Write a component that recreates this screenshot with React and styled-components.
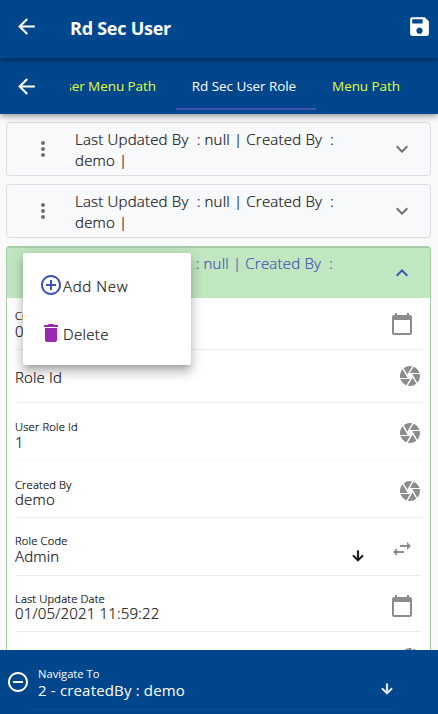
import React from "react";
import styled, { createGlobalStyle } from "styled-components";
import {
  MdArrowBack, MdSave, MdMoreVert, MdExpandMore, MdExpandLess, MdAddCircleOutline,
  MdDelete, MdCamera, MdCalendarToday, MdSwapHoriz, MdArrowDownward, MdRemoveCircleOutline,
} from "react-icons/md";

const GlobalStyle = createGlobalStyle`
  * { box-sizing: border-box; }
  body { margin: 0; background: #fafafa; overflow: hidden; }
  svg { display: block; flex: none; }
`;

const Page = styled.div`
  display: flex;
  flex-direction: column;
  width: 438px;
  height: 714px;
  overflow: hidden;
  background: #fafafa;
  color: #111;
  font: 300 15px/21px "Open Sans", "Noto Sans", sans-serif;
`;

const AppBar = styled.header`
  position: relative;
  z-index: 3;
  flex: none;
  display: flex;
  align-items: center;
  height: 58px;
  padding: 0 6px 6px 14px;
  background: #00468c;
  color: #fff;
  box-shadow: 0 2px 4px -1px rgba(0, 0, 0, 0.2), 0 4px 5px rgba(0, 0, 0, 0.14), 0 1px 10px rgba(0, 0, 0, 0.12);
`;

const Title = styled.h1`
  flex: 1;
  margin: 3px 0 0 31px;
  font-size: 18px;
  line-height: 24px;
  font-weight: 700;
  letter-spacing: -0.25px;
`;

const TabBar = styled.nav`
  position: relative;
  z-index: 2;
  flex: none;
  display: flex;
  align-items: center;
  height: 56px;
  padding-left: 14px;
  background: #00468c;
  color: #fff;
  box-shadow: 0 2px 4px -1px rgba(0, 0, 0, 0.2), 0 4px 5px rgba(0, 0, 0, 0.14), 0 1px 10px rgba(0, 0, 0, 0.12);
`;

const Tabs = styled.div`
  display: flex;
  width: 369px;
  height: 56px;
  margin-left: 31px;
  overflow: hidden;
`;

const Tab = styled.div`
  flex: none;
  display: flex;
  justify-content: ${(p) => p.$align || "center"};
  width: ${(p) => p.$width}px;
  height: 52px;
  padding: 18px ${(p) => (p.$align ? 20 : p.$active ? 4 : 0)}px 0 0;
  font-size: 13.5px;
  font-weight: 400;
  line-height: 20px;
  white-space: nowrap;
  letter-spacing: -0.07px;
  color: ${(p) => (p.$active ? "#fff" : "#e2ff38")};
  border-bottom: 2px solid ${(p) => (p.$active ? "#3f51b5" : "transparent")};
`;

const Content = styled.main`
  position: relative;
  flex: 1;
  min-height: 0;
  display: flex;
  flex-direction: column;
  gap: 8px;
  padding: 8px 7px 0 6px;
  overflow: hidden;
  -webkit-text-stroke: 0.2px currentColor;
`;

const Summary = styled.div`
  flex: none;
  display: flex;
  align-items: center;
  height: ${(p) => (p.$open ? 50 : 54)}px;
  padding: 0 16px 0 ${(p) => (p.$open ? 23 : 24)}px;
  border: ${(p) => (p.$open ? "0" : "1px solid #dadce0")};
  border-radius: ${(p) => (p.$open ? 0 : 4)}px;
  background: ${(p) => (p.$open ? "#c1e7c1" : "#f8f9fb")};
  color: ${(p) => (p.$open ? "#3f51b5" : "#111")};
`;

const SummaryText = styled.div`
  flex: 1;
  height: 42px;
  margin: ${(p) => (p.$open ? "1px" : "2px")} 0 0 20px;
  white-space: pre;
  letter-spacing: 0.2px;
`;

const IconTone = styled.span`
  display: flex;
  color: ${(p) => p.$color};
`;

const OpenPanel = styled.section`
  flex: none;
  border: 1px solid #a5cdaa;
  border-top-width: 2px;
  border-radius: 4px;
  background: #fff;
  overflow: hidden;
`;

const Fields = styled.div`
  padding: 0 8px;
`;

const Field = styled.div`
  display: flex;
  align-items: flex-end;
  justify-content: space-between;
  height: ${(p) => p.$height}px;
  border-bottom: 1px solid ${(p) => p.$line || "#ececec"};
`;

const FieldText = styled.div`
  flex: 1;
  padding-bottom: ${(p) => p.$lift}px;
`;

const Label = styled.div`
  height: ${(p) => p.$height || 15}px;
  font-size: 11.2px;
  line-height: 16px;
  letter-spacing: 0.16px;
  color: #000;
`;

const Value = styled.div`
  height: 17px;
  line-height: 17px;
  letter-spacing: 0.17px;
`;

const FieldIcon = styled.div`
  display: flex;
  align-items: flex-end;
  padding: 0 ${(p) => p.$right}px ${(p) => p.$lift}px 0;
  color: #8c8c8c;
`;

const Dropdown = styled.div`
  padding: 0 24px 0 0;
  margin-bottom: -3px;
  color: #000;
`;

const BoldArrow = styled(MdArrowDownward)`
  path:last-child {
    stroke: currentColor;
    stroke-width: 1px;
  }
`;

const Menu = styled.div`
  position: absolute;
  z-index: 2;
  left: 23px;
  top: 139px;
  width: 168px;
  height: 112px;
  padding: 8px 16px;
  border-radius: 2px;
  background: #fff;
  box-shadow: 0 5px 5px -3px rgba(0, 0, 0, 0.2), 0 8px 10px 1px rgba(0, 0, 0, 0.14), 0 3px 14px 2px rgba(0, 0, 0, 0.12);
`;

const MenuItem = styled.div`
  display: flex;
  align-items: center;
  height: 48px;
  line-height: 24px;
`;

const MenuLabel = styled.span`
  padding-top: 2px;
  letter-spacing: ${(p) => p.$spacing}px;
`;

const BottomBar = styled.footer`
  position: relative;
  z-index: 3;
  flex: none;
  display: flex;
  height: 64px;
  padding-left: 6px;
  background: #00468c;
  color: #fff;
`;

const BottomIcon = styled.div`
  width: 24px;
  padding-top: 20px;
`;

const Navigate = styled.div`
  display: flex;
  justify-content: space-between;
  width: 365px;
  height: 60px;
  padding: 16px 0 0 8px;
  border-bottom: 1px solid #0a4d91;
  font-weight: 400;
`;

const NavLabel = styled(Label)`
  letter-spacing: 0;
  color: #fff;
`;

const NavArrow = styled.div`
  padding-top: 15px;
`;

const fields = [
  { label: "Created Date", value: "01/05/2021 11:59:22", height: 52, lift: 9, labelHeight: 15, Icon: MdCalendarToday, iconLift: 13, right: 8 },
  { value: "Role Id", height: 53, lift: 16, Icon: MdCamera, iconLift: 14, right: 0 },
  { label: "User Role Id", value: "1", height: 58, lift: 9, labelHeight: 15, Icon: MdCamera, iconLift: 15, right: 0, line: "#f7f7f7" },
  { label: "Created By", value: "demo", height: 57, lift: 9, labelHeight: 14, Icon: MdCamera, iconLift: 14, right: 0 },
  { label: "Role Code", value: "Admin", height: 58, lift: 10, labelHeight: 15, Icon: MdSwapHoriz, iconLift: 14, right: 8, dropdown: true },
  { label: "Last Update Date", value: "01/05/2021 11:59:22", height: 56, lift: 9, labelHeight: 14, Icon: MdCalendarToday, iconLift: 13, right: 8 },
  { value: "Updated By", height: 57, lift: 10, Icon: MdCamera, iconLift: 18, right: 0 },
];

function SummaryRow({ open }) {
  return (
    <Summary $open={open}>
      <IconTone $color="#707070"><MdMoreVert size={24} /></IconTone>
      <SummaryText $open={open}>{"Last Updated By  : null | Created By  :\ndemo |"}</SummaryText>
      <IconTone $color={open ? "#3f51b5" : "#707070"}>
        {open ? <MdExpandLess size={24} /> : <MdExpandMore size={24} />}
      </IconTone>
    </Summary>
  );
}

export default function App() {
  return (
    <Page>
      <GlobalStyle />
      <AppBar>
        <MdArrowBack size={25} />
        <Title>Rd Sec User</Title>
        <MdSave size={25} />
      </AppBar>
      <TabBar>
        <MdArrowBack size={25} />
        <Tabs>
          <Tab $width={106} $align="flex-end">User Menu Path</Tab>
          <Tab $width={140} $active>Rd Sec User Role</Tab>
          <Tab $width={100}>Menu Path</Tab>
        </Tabs>
      </TabBar>
      <Content>
        <SummaryRow />
        <SummaryRow />
        <OpenPanel>
          <SummaryRow open />
          <Fields>
            {fields.map((f, i) => (
              <Field key={i} $height={f.height} $line={f.line}>
                <FieldText $lift={f.lift}>
                  {f.label && <Label $height={f.labelHeight}>{f.label}</Label>}
                  <Value>{f.value}</Value>
                </FieldText>
                <FieldIcon $right={f.right} $lift={f.iconLift}>
                  {f.dropdown && <Dropdown><BoldArrow size={16} /></Dropdown>}
                  <f.Icon size={24} />
                </FieldIcon>
              </Field>
            ))}
          </Fields>
        </OpenPanel>
        <Menu>
          <MenuItem>
            <IconTone $color="#3f51b5"><MdAddCircleOutline size={24} /></IconTone>
            <MenuLabel $spacing={0.65}>Add New</MenuLabel>
          </MenuItem>
          <MenuItem>
            <IconTone $color="#9c27b0"><MdDelete size={24} /></IconTone>
            <MenuLabel $spacing={0.35}>Delete</MenuLabel>
          </MenuItem>
        </Menu>
      </Content>
      <BottomBar>
        <BottomIcon><MdRemoveCircleOutline size={24} /></BottomIcon>
        <Navigate>
          <div>
            <NavLabel $height={16}>Navigate To</NavLabel>
            <Value>2 - createdBy : demo</Value>
          </div>
          <NavArrow><BoldArrow size={16} /></NavArrow>
        </Navigate>
      </BottomBar>
    </Page>
  );
}
